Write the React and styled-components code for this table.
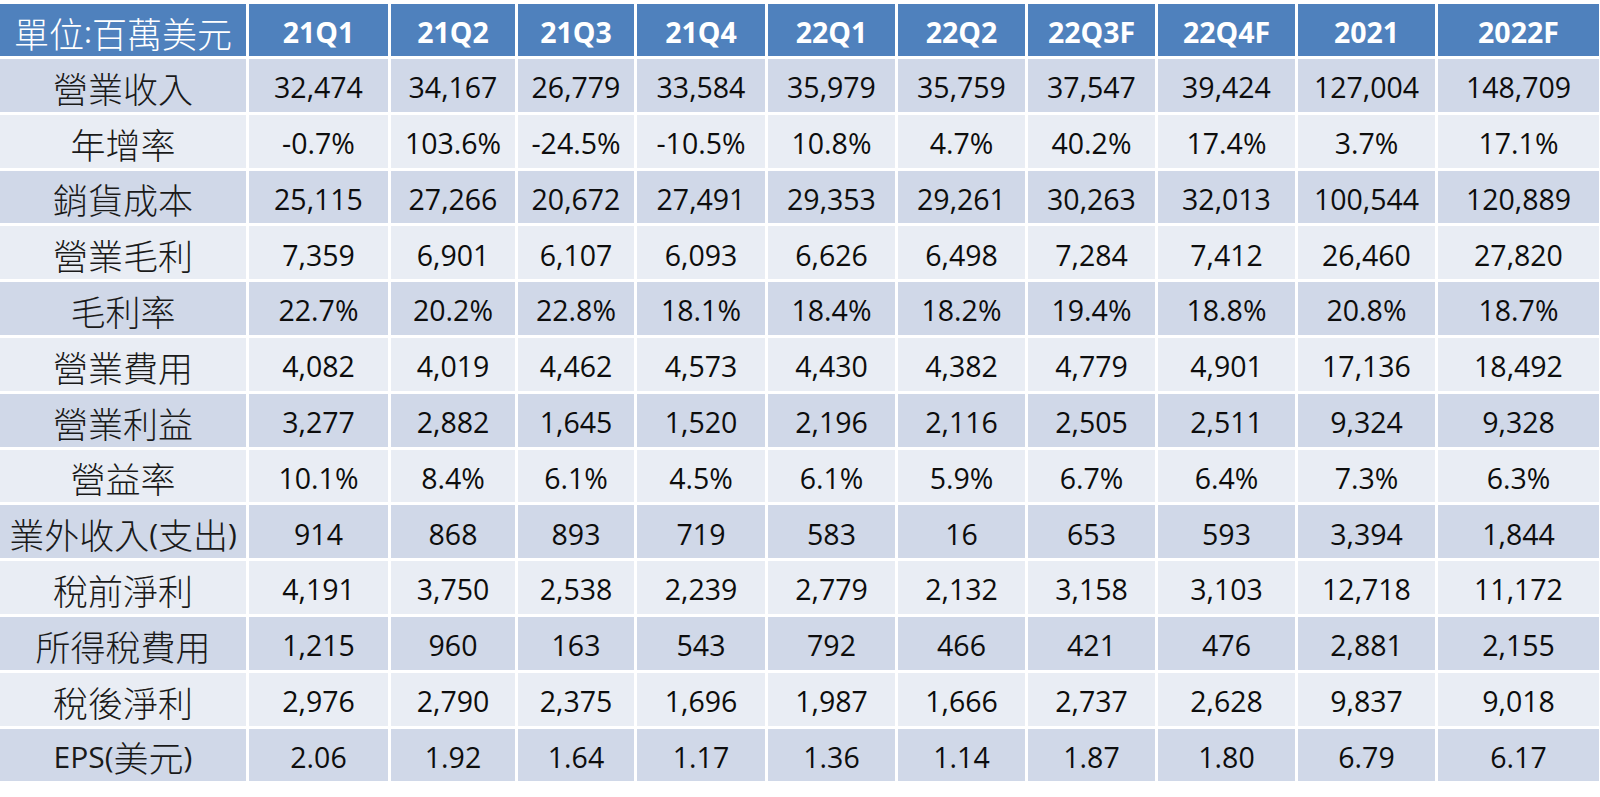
import React from 'react';
import styled, { createGlobalStyle } from 'styled-components';

const GlobalStyle = createGlobalStyle`
  html, body {
    margin: 0;
    padding: 0;
    background: #ffffff;
  }
  body {
    font-family: 'Open Sans', 'Noto Sans CJK TC', sans-serif;
  }
`;

const HEADERS = ['21Q1', '21Q2', '21Q3', '21Q4', '22Q1', '22Q2', '22Q3F', '22Q4F', '2021', '2022F'];

const ROWS = [
  ['營業收入', '32,474', '34,167', '26,779', '33,584', '35,979', '35,759', '37,547', '39,424', '127,004', '148,709'],
  ['年增率', '-0.7%', '103.6%', '-24.5%', '-10.5%', '10.8%', '4.7%', '40.2%', '17.4%', '3.7%', '17.1%'],
  ['銷貨成本', '25,115', '27,266', '20,672', '27,491', '29,353', '29,261', '30,263', '32,013', '100,544', '120,889'],
  ['營業毛利', '7,359', '6,901', '6,107', '6,093', '6,626', '6,498', '7,284', '7,412', '26,460', '27,820'],
  ['毛利率', '22.7%', '20.2%', '22.8%', '18.1%', '18.4%', '18.2%', '19.4%', '18.8%', '20.8%', '18.7%'],
  ['營業費用', '4,082', '4,019', '4,462', '4,573', '4,430', '4,382', '4,779', '4,901', '17,136', '18,492'],
  ['營業利益', '3,277', '2,882', '1,645', '1,520', '2,196', '2,116', '2,505', '2,511', '9,324', '9,328'],
  ['營益率', '10.1%', '8.4%', '6.1%', '4.5%', '6.1%', '5.9%', '6.7%', '6.4%', '7.3%', '6.3%'],
  ['業外收入(支出)', '914', '868', '893', '719', '583', '16', '653', '593', '3,394', '1,844'],
  ['稅前淨利', '4,191', '3,750', '2,538', '2,239', '2,779', '2,132', '3,158', '3,103', '12,718', '11,172'],
  ['所得稅費用', '1,215', '960', '163', '543', '792', '466', '421', '476', '2,881', '2,155'],
  ['稅後淨利', '2,976', '2,790', '2,375', '1,696', '1,987', '1,666', '2,737', '2,628', '9,837', '9,018'],
  ['EPS(美元)', '2.06', '1.92', '1.64', '1.17', '1.36', '1.14', '1.87', '1.80', '6.79', '6.17'],
];

const Page = styled.div`
  padding-top: 4px;
  width: 1600px;
`;

const Table = styled.div`
  display: grid;
  width: 1599px;
  grid-template-columns: 246px 139px 124px 116px 128px 127px 127px 127px 137px 137px 161px;
  grid-template-rows: 52px repeat(13, 52.8px);
  gap: 3px;
  background: #ffffff;
`;

const Cell = styled.div`
  display: flex;
  align-items: center;
  justify-content: center;
  padding-top: 4px;
  box-sizing: border-box;
  white-space: nowrap;
  line-height: 1;
  font-size: 28.5px;
  font-weight: ${(p) => (p.$head ? 700 : 400)};
  color: ${(p) => (p.$head ? '#ffffff' : '#0d0d0d')};
  background: ${(p) => (p.$head ? '#4f81bd' : p.$dark ? '#d0d8e8' : '#e9edf4')};
`;

const LabelCell = styled(Cell)`
  font-size: 30px;
  font-weight: 400;
  color: ${(p) => (p.$head ? '#ffffff' : '#1a1a1a')};
`;

const Han = styled.span`
  font-family: 'Noto Sans CJK TC', sans-serif;
  font-size: 35px;
  font-weight: 300;
`;

// wrap the chinese runs so they get the larger CJK size, latin stays at table size
function Label({ text }) {
  const parts = text.split(/([\u3400-\u9fff]+)/).filter(Boolean);
  return parts.map((part, i) =>
    /[\u3400-\u9fff]/.test(part) ? <Han key={i}>{part}</Han> : <span key={i}>{part}</span>
  );
}

export default function App() {
  return (
    <Page>
      <GlobalStyle />
      <Table>
        <LabelCell $head>
          <Label text='單位:百萬美元' />
        </LabelCell>
        {HEADERS.map((h) => (
          <Cell key={h} $head>
            {h}
          </Cell>
        ))}
        {ROWS.map((row, r) => (
          <React.Fragment key={row[0]}>
            <LabelCell $dark={r % 2 === 0}>
              <Label text={row[0]} />
            </LabelCell>
            {row.slice(1).map((v, c) => (
              <Cell key={c} $dark={r % 2 === 0}>
                {v}
              </Cell>
            ))}
          </React.Fragment>
        ))}
      </Table>
    </Page>
  );
}
